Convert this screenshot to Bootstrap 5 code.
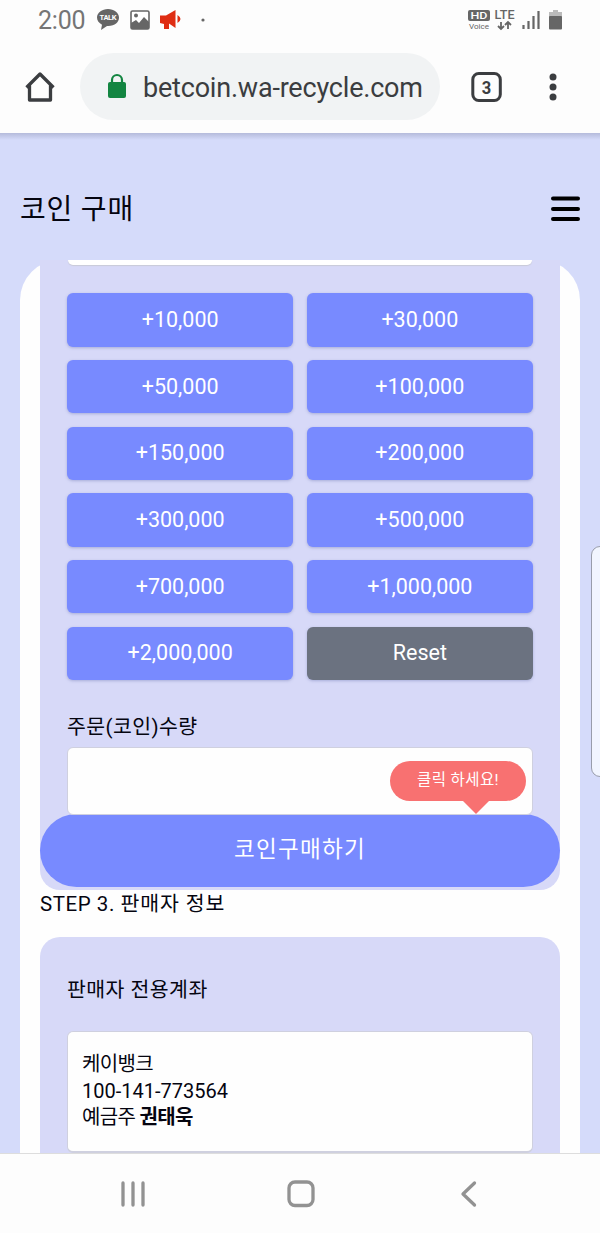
<!DOCTYPE html>
<html lang="ko">
<head>
<meta charset="utf-8">
<meta name="viewport" content="width=device-width, initial-scale=1">
<title>코인 구매</title>
<link href="https://cdn.jsdelivr.net/npm/bootstrap@5.3.0/dist/css/bootstrap.min.css" rel="stylesheet">
<style>
body{font-family:Roboto,"Noto Sans CJK KR",sans-serif;color:#050510;background:#fdfdfd;height:1233px;overflow:hidden;font-size:20px}
svg{display:block;flex:none}
.statusbar{height:40px;padding-left:38px;padding-right:37px;color:#666}
.clock{font-size:25px;line-height:40px;width:59px;letter-spacing:-.2px;color:#757575;padding-top:2px}
.pic{margin-left:9px}
.horn{margin-left:10px}
.dot{margin-left:17px}
.toolbar{height:93px;padding:0 23px 0 24px}
.address{width:360px;height:67px;background:#f1f3f4;border-radius:34px;margin-left:24px;padding-left:26px;color:#3b3d40;font-size:27px}
.address span{margin-left:15px;white-space:nowrap;letter-spacing:-.2px;padding-top:3px}
.tabs{margin-left:31px}
.viewport{height:1020px;background:#d5dbfa;overflow:hidden;position:relative}
.viewport::before{content:"";position:absolute;left:0;right:0;top:0;height:7px;background:linear-gradient(#b5bbdb,#d5dbfa)}
.pagehead{height:127px;padding:24px 20px 0}
.pagehead h1{font-size:28px;font-weight:400;margin:33px 0 0;line-height:40px;letter-spacing:.8px}
.burger{margin-top:38px}
.sheet{height:893px;margin:0 20px;background:#fefefe;border-radius:40px 40px 0 0;padding:0 20px}
.panel{background:#d7d9f8;padding:0 27px}
.orderpanel{height:630px;border-radius:0 0 20px 20px}
.clipped{height:5px;background:#fff;border-radius:0 0 6px 6px;box-shadow:0 1px 1px #c9cad8;margin:0 1px 28.4px}
.amounts{display:grid;grid-template-columns:1fr 1fr;gap:13.33px}
.btn-amount{height:53.33px;padding:0;border:0;border-radius:6px;background:#788aff;color:#fff;font-size:21.5px;box-shadow:0 1px 3px rgba(100,110,170,.4)}
.btn-amount.reset{background:#6b7280}
.fieldlabel{line-height:30px;margin-top:32px;margin-bottom:4.600px;font-size:20.5px;letter-spacing:.4px}
.whitebox{background:#fefefe;border:1px solid #cfd0df;border-radius:6px}
.qty{height:68px}
.buy{height:73px;margin:-1px -27px 0;border-radius:37px;background:#788aff;color:#fff;font-size:22.5px;width:520px;letter-spacing:1.3px;border:0;display:block}
.tip{position:absolute;right:6px;top:13px;width:136px;height:40px;border-radius:20px;background:#f87171;color:#fff;font-size:15.5px;letter-spacing:.4px}
.tip::after{content:"";position:absolute;left:72px;top:39px;border:14px solid transparent;border-top-color:#f87171;border-bottom:0}
.step{line-height:26px;height:47px;font-size:20.5px;letter-spacing:.55px;padding-top:1px}
.seller{height:216px;border-radius:20px 20px 0 0;padding-top:38px}
.step .wide{letter-spacing:.9px}
.sellerlabel{line-height:30px;font-size:20.5px;letter-spacing:.45px}
.account{height:122px;margin-top:26px;padding:19px 14px;line-height:26.7px;border-bottom-width:2px}
.tight{letter-spacing:-.65px}
.edge{position:absolute;left:591px;top:413px;width:20px;height:231px;background:#f1f5ff;border:1px solid #999dab;border-radius:9px}
.navkeys{height:80px;border-top:1px solid #ddd;background:#fdfdfd}
</style>
</head>
<body>
<header class="statusbar d-flex align-items-center">
  <span class="clock">2:00</span>
  <svg width="24" height="24" viewBox="0 0 24 24"><path d="M11 1C5 1 0 4.700 0 9.500c0 3 2 5.700 5 7.200L4 22l6-4c7.500.5 12-3.700 12-8.500S17 1 11 1Z" fill="#666"/><text x="11" y="12.300" text-anchor="middle" font-size="7.500" font-weight="700" textLength="17" fill="#fff">TALK</text></svg>
  <svg class="pic" width="20" height="20" viewBox="0 0 20 20"><rect x="1" y="1" width="18" height="18" rx="1.500" fill="#fff" stroke="#666" stroke-width="1.600"/><path d="M1 19v-6l5-3 3 3 5-6 5 5v7Z" fill="#666"/><circle cx="6" cy="5.500" r="2" fill="#666"/></svg>
  <svg class="horn" width="24" height="22" viewBox="0 0 24 22"><path d="M0 6.500h6L15.500 1v18L9 14.500V20H4V15L0 14Z" fill="#df2d13"/><path d="M17.500 6q6 4 0 8Z" fill="#df2d13"/></svg>
  <svg class="dot" width="4" height="4"><circle cx="2" cy="2" r="1.600" fill="#666"/></svg>
  <svg class="ms-auto" width="96" height="24" viewBox="0 0 96 24"><rect x="1" y="2" width="22" height="11" rx="2" fill="#666"/><text x="12" y="11" text-anchor="middle" font-size="9.500" font-weight="500" textLength="17" lengthAdjust="spacingAndGlyphs" fill="#fff">HD</text><text x="2" y="20.500" font-size="8" textLength="20" lengthAdjust="spacingAndGlyphs" fill="#666">Voice</text><text x="27.500" y="11" font-size="12" font-weight="500" textLength="20" lengthAdjust="spacingAndGlyphs" fill="#666">LTE</text><path d="M34 14v7m-3-3 3 3 3-3m4 3v-7m-3 3 3-3 3 3" fill="none" stroke="#666" stroke-width="1.800"/><path d="M56.500 17v4M61.500 13v8M66.500 8v13M71.500 3v18" stroke="#666" stroke-width="2.200"/><path d="M86 2h5v2h4v5H82V4h4Z" fill="#bbb"/><rect x="82" y="8" width="13" height="13.500" rx="1" fill="#666"/></svg>
</header>
<nav class="toolbar d-flex align-items-center">
  <svg width="32" height="32" viewBox="0 0 32 32"><path d="M2.500 16.500 16 3l13.500 13.500M5.500 14v15h21V14" fill="none" stroke="#3b3d40" stroke-width="3.300" stroke-linejoin="round"/></svg>
  <div class="address d-flex align-items-center">
    <svg width="22" height="28" viewBox="0 0 22 28"><rect x="2" y="9" width="18" height="16" rx="2" fill="#138541"/><path d="M6 10V7a5 5 0 0 1 10 0v3" fill="none" stroke="#138541" stroke-width="2.200"/></svg>
    <span>betcoin.wa-recycle.com</span>
  </div>
  <svg class="tabs" width="32" height="32" viewBox="0 0 32 32"><rect x="1.800" y="2.500" width="27.500" height="27" rx="6" fill="none" stroke="#3b3d40" stroke-width="3"/><text x="15.500" y="22.500" text-anchor="middle" font-size="19" font-weight="700" textLength="9.500" lengthAdjust="spacingAndGlyphs" fill="#3b3d40">3</text></svg>
  <svg class="ms-auto" width="46" height="32"><g fill="#3b3d40"><circle cx="22" cy="6" r="3.500"/><circle cx="22" cy="16" r="3.500"/><circle cx="22" cy="26" r="3.500"/></g></svg>
</nav>
<main class="viewport">
  <div class="pagehead d-flex justify-content-between align-items-start">
    <h1>코인 구매</h1>
    <svg class="burger" width="29" height="28"><path d="M2 3.500h25M2 14h25M2 24h25" stroke="#000" stroke-width="4" stroke-linecap="round"/></svg>
  </div>
  <section class="sheet">
    <div class="panel orderpanel">
      <div class="clipped"></div>
      <div class="amounts">
        <button class="btn btn-amount">+10,000</button><button class="btn btn-amount">+30,000</button>
        <button class="btn btn-amount">+50,000</button><button class="btn btn-amount">+100,000</button>
        <button class="btn btn-amount">+150,000</button><button class="btn btn-amount">+200,000</button>
        <button class="btn btn-amount">+300,000</button><button class="btn btn-amount">+500,000</button>
        <button class="btn btn-amount">+700,000</button><button class="btn btn-amount">+1,000,000</button>
        <button class="btn btn-amount">+2,000,000</button><button class="btn btn-amount reset">Reset</button>
      </div>
      <div class="fieldlabel">주문(코인)수량</div>
      <div class="whitebox qty position-relative"><div class="tip d-flex align-items-center justify-content-center">클릭 하세요!</div></div>
      <button class="buy">코인구매하기</button>
    </div>
    <div class="step">STEP 3. <span class="wide">판매자 정보</span></div>
    <div class="panel seller">
      <div class="sellerlabel">판매자 전용계좌</div>
      <div class="whitebox account"><span class="tight">케이뱅크</span><br>100-141-773564<br><span class="tight">예금주 <b>권태욱</b></span></div>
    </div>
  </section>
  <div class="edge"></div>
</main>
<footer class="navkeys">
  <svg class="mx-auto" width="360" height="79" viewBox="0 0 360 79"><g fill="none" stroke="#929292" stroke-width="3.300" stroke-linecap="round" stroke-linejoin="round"><path d="M3 29v22M13 29v22M23 29v22"/><rect x="169" y="28" width="24" height="23.500" rx="6"/><path d="M354.500 29 343 40l11.500 11"/></g></svg>
</footer>
<script src="https://cdn.jsdelivr.net/npm/bootstrap@5.3.0/dist/js/bootstrap.bundle.min.js"></script>
</body>
</html>
